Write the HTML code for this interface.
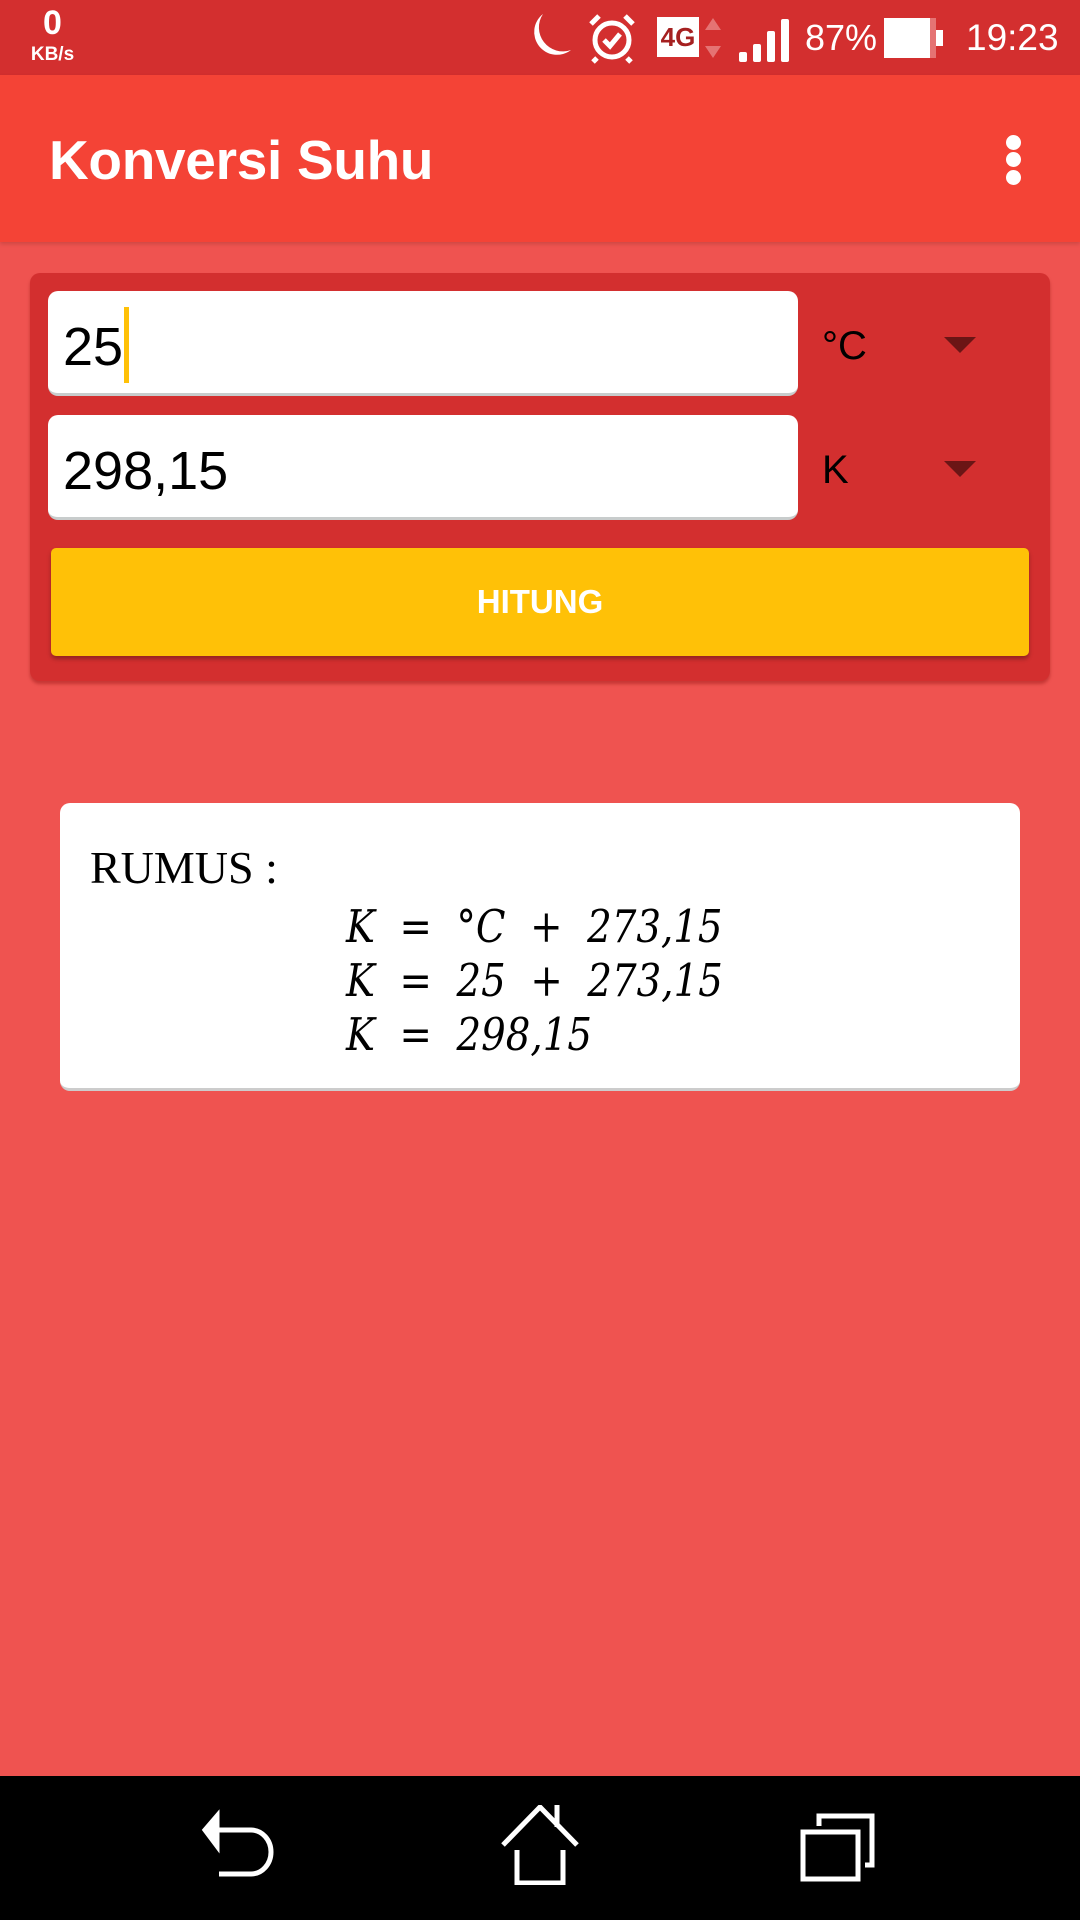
<!DOCTYPE html>
<html><head><meta charset="utf-8"><style>
*{margin:0;padding:0;box-sizing:border-box}
body{width:1080px;height:1920px;background:#EF5350;position:relative;overflow:hidden;font-family:"Liberation Sans",sans-serif}
.abs{position:absolute}
</style></head><body>
<div class="abs" style="left:0;top:0;width:1080px;height:75px;background:#D32F2F"></div>
<div class="abs" style="left:0;top:6px;width:105px;text-align:center;color:#fff;font-weight:bold;font-size:34px;line-height:34px">0</div>
<div class="abs" style="left:0;top:44px;width:105px;text-align:center;color:#fff;font-weight:bold;font-size:19px">KB/s</div>
<svg class="abs" style="left:515px;top:10px" width="60" height="56"><path d="M28 4 A22 22 0 1 0 56 40 A24 24 0 0 1 28 4Z" fill="#fff"/></svg>
<svg class="abs" style="left:585px;top:12px" width="54" height="52" fill="none" stroke="#fff" stroke-width="5"><circle cx="27" cy="28" r="17"/><path d="M19 28l6 6 10-12"/><path d="M6 12 L14 4 M48 12 L40 4 M12 46 L8 50 M42 46 L46 50"/></svg>
<div class="abs" style="left:657px;top:17px;width:42px;height:40px;background:#fff;color:#A52020;font-weight:bold;font-size:26px;line-height:40px;text-align:center">4G</div>
<svg class="abs" style="left:704px;top:18px" width="18" height="40" fill="#E57373"><path d="M9 0L17 12H1Z M9 40L17 28H1Z"/></svg>
<svg class="abs" style="left:738px;top:18px" width="54" height="44" fill="#fff"><rect x="1" y="34" width="8" height="10" rx="2"/><rect x="15" y="26" width="8" height="18" rx="2"/><rect x="29" y="13" width="8" height="31" rx="2"/><rect x="43" y="1" width="8" height="43" rx="2"/></svg>
<div class="abs" style="left:805px;top:18px;color:#fff;font-size:36px;line-height:40px">87%</div>
<div class="abs" style="left:884px;top:18px;width:52px;height:40px;background:#fff;border-right:6px solid #E57373"></div>
<div class="abs" style="left:936px;top:30px;width:7px;height:16px;background:#fff"></div>
<div class="abs" style="left:966px;top:18px;color:#fff;font-size:37px;line-height:40px">19:23</div>

<div class="abs" style="left:0;top:75px;width:1080px;height:167px;background:#F44336;box-shadow:0 2px 4px rgba(0,0,0,.15)"></div>
<div class="abs" style="left:49px;top:128px;color:#fff;font-size:55px;line-height:64px;font-weight:bold;letter-spacing:-0.3px">Konversi Suhu</div>
<div class="abs" style="left:1006px;top:135px;width:15px;height:15px;border-radius:50%;background:#fff"></div>
<div class="abs" style="left:1006px;top:152px;width:15px;height:15px;border-radius:50%;background:#fff"></div>
<div class="abs" style="left:1006px;top:170px;width:15px;height:15px;border-radius:50%;background:#fff"></div>

<div class="abs" style="left:30px;top:273px;width:1020px;height:408px;background:#D32F2F;border-radius:10px;box-shadow:0 3px 3px rgba(120,0,0,.35)"></div>
<div class="abs" style="left:48px;top:291px;width:750px;height:105px;background:#fff;border-radius:10px;border-bottom:3px solid #c8cccc"></div>
<div class="abs" style="left:63px;top:315px;font-size:54px;line-height:64px;color:#000">25</div>
<div class="abs" style="left:124px;top:307px;width:5px;height:76px;background:#FFC107"></div>
<div class="abs" style="left:48px;top:415px;width:750px;height:105px;background:#fff;border-radius:10px;border-bottom:3px solid #c8cccc"></div>
<div class="abs" style="left:63px;top:439px;font-size:54px;line-height:64px;color:#000">298,15</div>
<div class="abs" style="left:822px;top:322px;font-size:40px;line-height:48px;color:#000">°C</div>
<div class="abs" style="left:822px;top:446px;font-size:40px;line-height:48px;color:#000">K</div>
<svg class="abs" style="left:944px;top:335px" width="32" height="20"><path d="M0 2H32L16 18Z" fill="#6b1515"/></svg>
<svg class="abs" style="left:944px;top:459px" width="32" height="20"><path d="M0 2H32L16 18Z" fill="#6b1515"/></svg>
<div class="abs" style="left:51px;top:548px;width:978px;height:108px;background:#FFC107;border-radius:5px;box-shadow:0 3px 4px rgba(0,0,0,.3);color:#fff;font-size:33px;font-weight:bold;line-height:108px;text-align:center">HITUNG</div>

<div class="abs" style="left:60px;top:803px;width:960px;height:288px;background:#fff;border-radius:10px;border-bottom:3px solid #ccc"></div>
<div class="abs" style="left:90px;top:840px;font-family:'Liberation Serif',serif;font-size:46px;line-height:56px;color:#000">RUMUS :</div>
<div class="abs" style="left:346px;top:900px;font-family:'DejaVu Serif','Liberation Serif',serif;font-style:italic;font-size:45px;line-height:54px;color:#000;white-space:pre;transform:scaleX(0.86);transform-origin:left">K  =  °C  +  273,15
K  =  25  +  273,15
K  =  298,15</div>

<div class="abs" style="left:0;top:1776px;width:1080px;height:144px;background:#000"></div>
<svg class="abs" style="left:195px;top:1806px" width="90" height="80" fill="none" stroke="#fff" stroke-width="5"><path d="M20 24H56A20 22 0 0 1 56 68H24"/><path d="M22 10L10 24 22 40Z" fill="#fff"/></svg>
<svg class="abs" style="left:495px;top:1805px" width="92" height="80" fill="none" stroke="#fff" stroke-width="5"><path d="M8 40L45 2 82 40"/><path d="M62 0V22"/><path d="M22 45V78H68V45"/></svg>
<svg class="abs" style="left:797px;top:1812px" width="90" height="72" fill="none" stroke="#fff" stroke-width="5"><rect x="6" y="20" width="55" height="47"/><path d="M22 14V4H75V53H68"/></svg>
</body></html>
